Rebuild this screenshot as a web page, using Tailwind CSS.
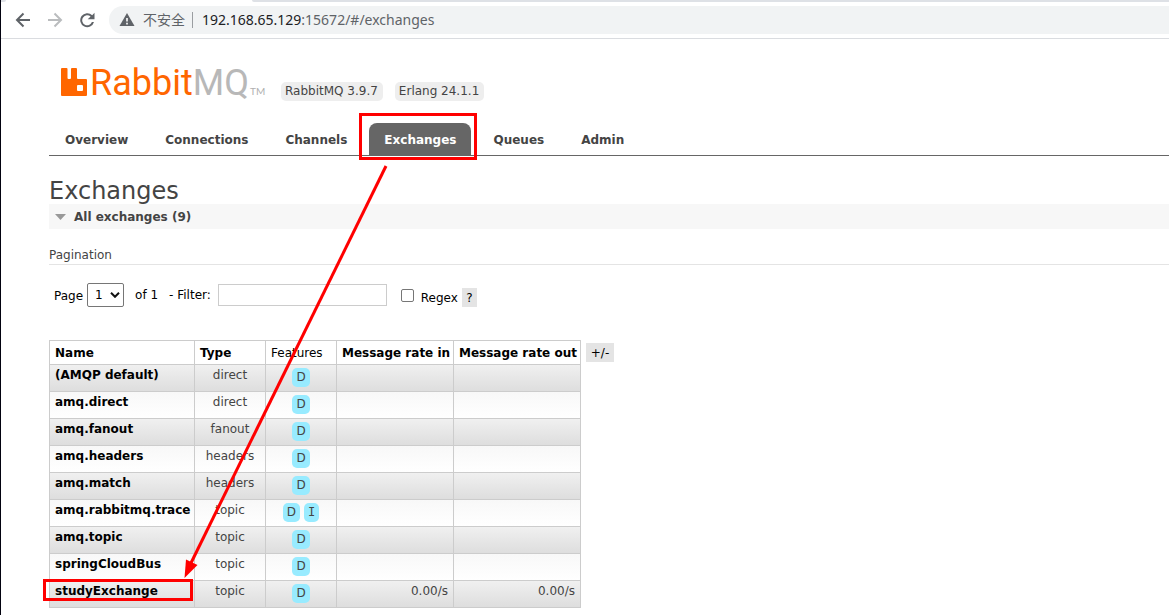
<!DOCTYPE html>
<html lang="en">
<head>
<meta charset="utf-8">
<title>RabbitMQ Management</title>
<script src="https://cdn.jsdelivr.net/npm/@tailwindcss/browser@4"></script>
</head>
<body class="relative min-h-screen overflow-hidden border-l border-[#02020f] bg-white font-['DejaVu_Sans',Verdana,sans-serif] text-xs text-[#444]">

<!-- Browser toolbar -->
<div class="relative flex h-[39px] items-center border-b border-[#dadce0] pt-px font-['Noto_Sans','Noto_Sans_CJK_SC',sans-serif] text-sm">
  <span class="absolute top-0 left-0 h-[2px] w-[5px] rounded-br bg-[#dee1e6]"></span>
  <span class="absolute top-0 right-0 left-[251px] h-[2px] rounded-bl bg-[#dee1e6]"></span>
  <button aria-label="Back" class="ml-[14px] size-4"><svg viewBox="0 0 16 16" class="size-4" fill="none" stroke="#5f6368" stroke-width="2"><path d="M15 8H2.5M8.5 1.5 2 8l6.500 6.500"/></svg></button>
  <button aria-label="Forward" class="ml-4 size-4"><svg viewBox="0 0 16 16" class="size-4" fill="none" stroke="#babcbe" stroke-width="2"><path d="M1 8h12.500M7.500 1.500 14 8l-6.500 6.500"/></svg></button>
  <button aria-label="Reload" class="ml-4 size-4"><svg viewBox="0 0 16 16" class="size-4"><path fill="#5f6368" d="M13.200 3.200A7 7 0 1 0 15 10h-2.100A5 5 0 1 1 11.600 4.600L8.700 7.300H15.500V.8z"/></svg></button>
  <div class="ml-[14px] flex h-7 flex-1 items-center rounded-l-full bg-[#f1f3f4]">
    <svg viewBox="0 0 16 14" class="ml-[10px] h-[14px] w-4"><path fill="#5f6368" d="M8 0 15.500 13H.5z"/><path fill="#fff" d="M7.200 5h1.600v3.600H7.200zM7.200 9.800h1.600v1.600H7.200z"/></svg>
    <span class="ml-2 text-[#5f6368]">不安全</span>
    <span class="mr-[9px] ml-[7px] h-4 w-px bg-[#9a9da1]"></span>
    <span class="text-[#5f6368]"><span class="text-[#202124]">192.168.65.129</span>:15672/#/exchanges</span>
  </div>
</div>

<div class="pl-12">
  <header class="flex items-start pt-[25px]">
    <a href="#/" class="ml-3 flex h-9 w-[205px] items-end" aria-label="RabbitMQ">
      <svg viewBox="0 0 26 28" class="mb-1 h-7 w-[26px]"><path fill="#f60" fill-rule="evenodd" d="M1 0h4.500q1 0 1 1v9q0 1 1 1H9q1 0 1-1V1q0-1 1-1h4q1 0 1 1v9q0 1 1 1h8q1 0 1 1v15q0 1-1 1H1q-1 0-1-1V1q0-1 1-1zM17 17q-1 0-1 1v4q0 1 1 1h4q1 0 1-1v-4q0-1-1-1z"/></svg>
      <span class="ml-[3px] w-[156px] font-['Roboto','Liberation_Sans',sans-serif] text-[36px] leading-[34px] text-[#b8b8b8]"><span class="text-[#f60]">Rabbit</span>MQ</span>
      <span class="mb-[3px] ml-[4px] font-['Lato',sans-serif] text-[10px] leading-3 text-[#b0b0b0]">TM</span>
    </a>
    <ul class="mt-[18px] ml-[15px] flex gap-3">
      <li class="rounded-[5px] bg-[#eee] pr-[5px] pl-1 leading-[19px]">RabbitMQ 3.9.7</li>
      <li class="rounded-[5px] bg-[#eee] pr-[5px] pl-1 leading-[19px]">Erlang 24.1.1</li>
    </ul>
  </header>

  <nav class="mt-[22px] flex gap-[7px] border-b border-[#666] pl-px font-bold leading-[30px] [&_a]:pt-[2px]">
    <a href="#/" class="px-[15px]">Overview</a>
    <a href="#/connections" class="px-[15px]">Connections</a>
    <a href="#/channels" class="px-[15px]">Channels</a>
    <a href="#/exchanges" class="rounded-t-lg bg-[#666] px-[15px] text-white">Exchanges</a>
    <a href="#/queues" class="px-[15px]">Queues</a>
    <a href="#/users" class="px-[15px]">Admin</a>
  </nav>

  <main>
    <h1 class="pt-[22px] text-2xl leading-[26px]">Exchanges</h1>
    <h2 class="flex h-[25px] items-center bg-[#f7f7f7] font-bold">
      <svg viewBox="0 0 11 6" class="ml-[6px] h-[6px] w-[11px]"><path fill="#999" d="M0 0h11L5.500 6z"/></svg>
      <span class="ml-2">All exchanges (9)</span>
    </h2>
    <h3 class="mt-[18px] border-b border-[#e4e4e4] leading-[17px]">Pagination</h3>

    <form class="mt-[18px] flex h-6 items-center pl-[5px] text-black">
      <label for="page" class="pt-[2px]">Page</label>
      <span class="relative ml-1 flex">
        <select id="page" class="h-6 w-[37px] appearance-none rounded-[2px] border border-[#767676] bg-white pl-[7px]"><option>1</option></select>
        <svg viewBox="0 0 10 6" class="pointer-events-none absolute top-[9px] right-1 h-[6px] w-[10px]" fill="none" stroke="#111" stroke-width="2"><path d="M1 .8 5 4.800 9 .8"/></svg>
      </span>
      <span class="ml-[11px]">of 1</span>
      <label for="filter" class="ml-[11px]">- Filter:</label>
      <input id="filter" type="text" class="ml-[7px] h-[22px] w-[169px] border border-[#ccc] bg-white px-1">
      <input id="regex" type="checkbox" class="ml-[14px] size-[13px] appearance-none rounded-[2px] border border-[#767676] bg-white">
      <label for="regex" class="ml-[7px] pt-[5px]">Regex</label>
      <button type="button" class="mt-[5px] ml-1 h-[19px] w-[15px] bg-[#e4e4e4]">?</button>
    </form>

    <div class="mt-[33px] flex items-start">
      <table class="w-[532px] table-fixed border-collapse text-center leading-4 [&_td]:border [&_td]:border-[#ccc] [&_td]:px-[5px] [&_td]:align-top [&_th]:border [&_th]:border-[#ccc] [&_th]:px-[5px]">
        <thead class="text-black">
          <tr class="h-6">
            <th class="w-[145px] text-left">Name</th>
            <th class="w-[71px] text-left">Type</th>
            <th class="w-[71px] text-left font-normal">Features</th>
            <th class="w-[117px] text-left whitespace-nowrap">Message rate in</th>
            <th class="text-left whitespace-nowrap">Message rate out</th>
          </tr>
        </thead>
        <tbody class="[&_a]:font-bold [&_a]:text-black [&_td:first-child]:text-left [&_tr]:h-[27px] [&_tr]:bg-linear-to-b [&_tr:nth-child(odd)]:from-[#f0f0f0] [&_tr:nth-child(odd)]:to-[#ddd] [&_tr:nth-child(even)]:from-[#f8f8f8] [&_tr:nth-child(even)]:to-white [&_abbr]:mt-px [&_abbr]:inline-block [&_abbr]:rounded-[5px] [&_abbr]:bg-[#98ebff] [&_abbr]:px-1 [&_abbr]:leading-[19px] [&_abbr]:no-underline [&_td]:pt-[2px] [&_td:nth-child(n+4)]:text-right">
          <tr><td><a href="#/e/default">(AMQP default)</a></td><td>direct</td><td class="leading-none"><abbr>D</abbr></td><td></td><td></td></tr>
          <tr><td><a href="#/e/direct">amq.direct</a></td><td>direct</td><td class="leading-none"><abbr>D</abbr></td><td></td><td></td></tr>
          <tr><td><a href="#/e/fanout">amq.fanout</a></td><td>fanout</td><td class="leading-none"><abbr>D</abbr></td><td></td><td></td></tr>
          <tr><td><a href="#/e/headers">amq.headers</a></td><td>headers</td><td class="leading-none"><abbr>D</abbr></td><td></td><td></td></tr>
          <tr><td><a href="#/e/match">amq.match</a></td><td>headers</td><td class="leading-none"><abbr>D</abbr></td><td></td><td></td></tr>
          <tr><td><a href="#/e/trace">amq.rabbitmq.trace</a></td><td>topic</td><td class="leading-none"><abbr>D</abbr> <abbr class="font-['DejaVu_Sans_Mono',monospace]">I</abbr></td><td></td><td></td></tr>
          <tr><td><a href="#/e/topic">amq.topic</a></td><td>topic</td><td class="leading-none"><abbr>D</abbr></td><td></td><td></td></tr>
          <tr><td><a href="#/e/bus">springCloudBus</a></td><td>topic</td><td class="leading-none"><abbr>D</abbr></td><td></td><td></td></tr>
          <tr><td><a href="#/e/study">studyExchange</a></td><td>topic</td><td class="leading-none"><abbr>D</abbr></td><td>0.00/s</td><td>0.00/s</td></tr>
        </tbody>
      </table>
      <button type="button" class="mt-[3px] ml-[5px] h-[19px] w-7 bg-[#e4e4e4] text-black">+/-</button>
    </div>
  </main>
</div>

<!-- Red annotations drawn over the page -->
<svg class="pointer-events-none absolute top-0 -left-px" width="640" height="615" viewBox="0 0 640 615" fill="none" stroke="#f00" stroke-width="3">
  <path d="M360.500 114.500h115v44h-115zM44.500 580.500h147v19h-147z"/>
  <path d="M386 166 191 563"/>
  <path fill="#f00" stroke="none" d="m184.500 578 1.500-18.500 11.500 5.500z"/>
</svg>
</body>
</html>
